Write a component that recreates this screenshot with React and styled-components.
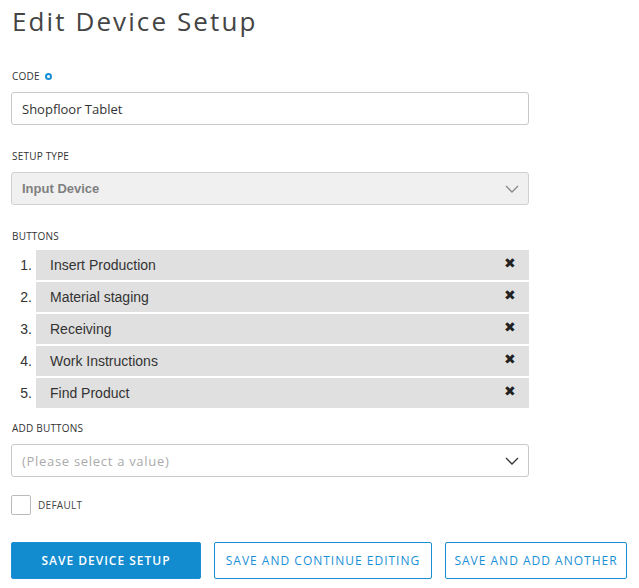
import React from "react";
import styled, { createGlobalStyle } from "styled-components";

const GlobalStyle = createGlobalStyle`
    body {
        margin: 0;
        background: #fff;
        font-family: "Open Sans", "Noto Sans", sans-serif;
        color: #333;
    }
`;

const buttons = [
    "Insert Production",
    "Material staging",
    "Receiving",
    "Work Instructions",
    "Find Product",
];

const Chevron = ({ color }) => (
    <svg width="14" height="8" viewBox="0 0 14 8">
        <path d="M1 1l6 6 6-6" fill="none" stroke={color} strokeWidth="1.3" />
    </svg>
);

const App = () => {
    return (
        <>
            <GlobalStyle />
            <Page>
                <Title>Edit Device Setup</Title>

                <Field $space={24}>
                    <Label>
                        Code <Required />
                    </Label>
                    <Input defaultValue="Shopfloor Tablet" />
                </Field>

                <Field $space={24}>
                    <Label>Setup Type</Label>
                    <Select $disabled>
                        <SelectText>Input Device</SelectText>
                        <Chevron color="#888" />
                    </Select>
                </Field>

                <Field $space={13}>
                    <Label>Buttons</Label>
                    <List>
                        {buttons.map((name, i) => (
                            <Row key={name}>
                                <Num>{i + 1}.</Num>
                                <Item>
                                    <span>{name}</span>
                                    <Remove>✖</Remove>
                                </Item>
                            </Row>
                        ))}
                    </List>
                </Field>

                <Field $space={18}>
                    <Label>Add Buttons</Label>
                    <Select>
                        <Placeholder>(Please select a value)</Placeholder>
                        <Chevron color="#333" />
                    </Select>
                </Field>

                <CheckRow>
                    <Box />
                    <CheckLabel>Default</CheckLabel>
                </CheckRow>

                <Actions>
                    <Button $primary $width={190}>Save Device Setup</Button>
                    <Button $width={218}>Save and Continue Editing</Button>
                    <Button $width={182}>Save and Add Another</Button>
                </Actions>
            </Page>
        </>
    );
};

export default App;

const Page = styled.div`
    width: 518px;
    padding: 3px 0 0 11px;
`;

const Title = styled.h1`
    margin: 0 0 30px 1px;
    font-size: 26px;
    font-weight: 400;
    letter-spacing: 2.1px;
    color: #444;
    line-height: 36px;
`;

const Field = styled.div`
    margin-bottom: ${p => p.$space}px;
`;

const Label = styled.div`
    display: flex;
    align-items: center;
    gap: 5px;
    font-size: 10px;
    text-transform: uppercase;
    color: #333;
    letter-spacing: 0.2px;
    line-height: 14px;
    margin: 0 0 9px 1px;
`;

const Required = styled.span`
    width: 3px;
    height: 3px;
    border: 2px solid #1a8fd6;
    border-radius: 50%;
`;

const Input = styled.input`
    box-sizing: border-box;
    width: 100%;
    height: 33px;
    border: 1px solid #c8c8c8;
    border-radius: 3px;
    padding: 0 10px;
    font-family: "Open Sans", "Noto Sans", sans-serif;
    font-size: 13px;
    color: #333;
    outline: none;
`;

const Select = styled.div`
    box-sizing: border-box;
    height: 33px;
    border: 1px solid ${p => (p.$disabled ? "#d0d0d0" : "#c8c8c8")};
    border-radius: 3px;
    background: ${p => (p.$disabled ? "#f0f0f0" : "#fff")};
    display: flex;
    align-items: center;
    justify-content: space-between;
    padding: 0 9px 0 10px;
`;

const SelectText = styled.span`
    font-family: "Liberation Sans", Arial, sans-serif;
    font-size: 13px;
    font-weight: bold;
    color: #808080;
`;

const Placeholder = styled.span`
    font-size: 13px;
    letter-spacing: 0.7px;
    color: #aaa;
`;

const List = styled.div`
    display: flex;
    flex-direction: column;
    gap: 2px;
    margin-top: -2px;
`;

const Row = styled.div`
    display: flex;
    align-items: stretch;
    font-family: "Liberation Sans", Arial, sans-serif;
    font-size: 14px;
    color: #333;
`;

const Num = styled.div`
    width: 21px;
    padding-right: 4px;
    display: flex;
    align-items: center;
    justify-content: flex-end;
`;

const Item = styled.div`
    flex: 1;
    height: 30px;
    background: #e0e0e0;
    display: flex;
    align-items: center;
    justify-content: space-between;
    padding: 0 13px 0 14px;
`;

const Remove = styled.span`
    font-size: 14px;
    color: #222;
    margin-top: -4px;
`;

const CheckRow = styled.div`
    display: flex;
    align-items: center;
    gap: 7px;
    margin-top: 4px;
`;

const Box = styled.div`
    width: 18px;
    height: 18px;
    border: 1px solid #bbb;
    border-radius: 2px;
`;

const CheckLabel = styled.span`
    font-size: 10px;
    text-transform: uppercase;
    color: #444;
    letter-spacing: 0.3px;
`;

const Actions = styled.div`
    display: flex;
    gap: 13px;
    margin-top: 27px;
`;

const Button = styled.button`
    flex: none;
    box-sizing: border-box;
    width: ${p => p.$width}px;
    height: 37px;
    padding: 0;
    border: 1px solid #1a8fd6;
    border-radius: 2px;
    background: ${p => (p.$primary ? "#138bcf" : "#fff")};
    color: ${p => (p.$primary ? "#fff" : "#1a8fd6")};
    font-family: "Open Sans", "Noto Sans", sans-serif;
    font-size: 12px;
    font-weight: ${p => (p.$primary ? 600 : 500)};
    letter-spacing: 1px;
    text-transform: uppercase;
    white-space: nowrap;
`;
